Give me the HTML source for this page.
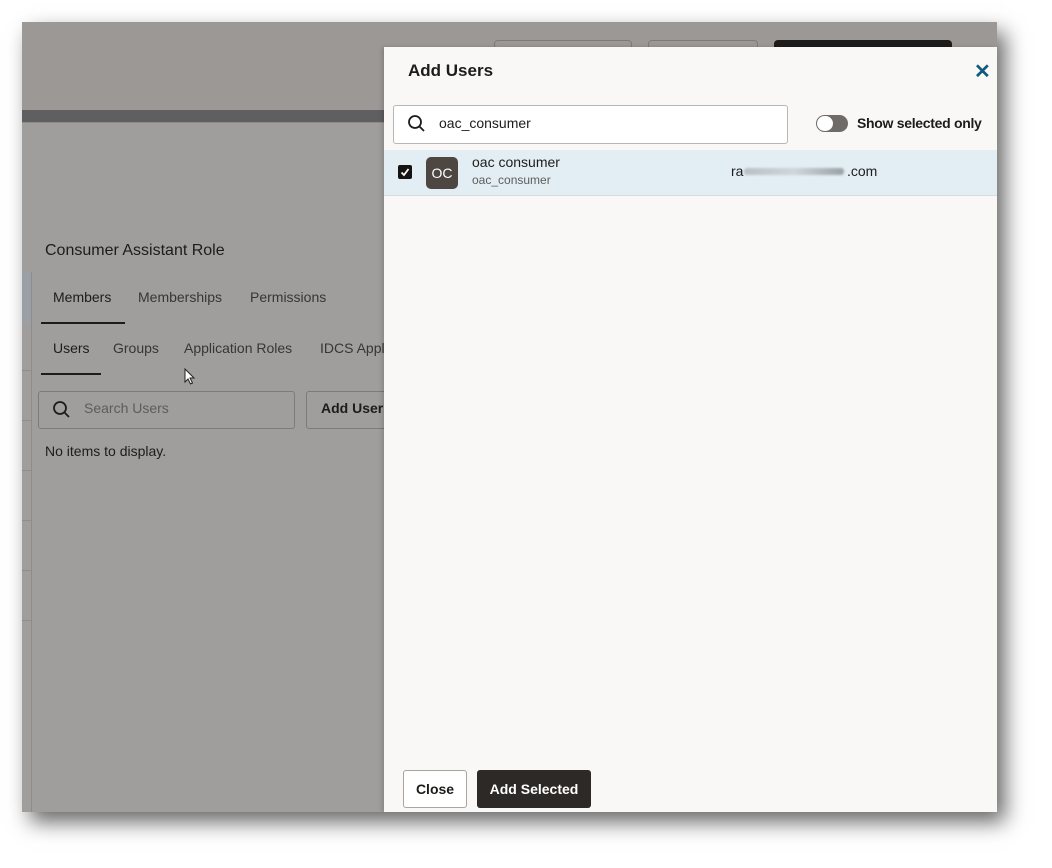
<!DOCTYPE html>
<html><head><meta charset="utf-8"><style>
*{box-sizing:border-box;margin:0;padding:0}
body{width:1052px;height:868px;background:#fff;font-family:"Liberation Sans",sans-serif;position:relative;overflow:hidden}
.shot{position:absolute;left:22px;top:22px;width:975px;height:790px;background:#a09e9c;box-shadow:8px 10px 20px rgba(0,0,0,.6);overflow:hidden}
.abs{position:absolute}
.t{position:absolute;white-space:nowrap;color:#1e1c1a}
</style></head><body>
<div class="shot">
  <div class="abs" style="left:0;top:0;width:975px;height:88px;background:#9c9896"></div>
  <div class="abs" style="left:0;top:88px;width:975px;height:12px;background:#5f5e60"></div>
  <div class="abs" style="left:0;top:100px;width:975px;height:1px;background:#8d8b89"></div>
  <div class="abs" style="left:472px;top:18px;width:138px;height:30px;border:1px solid #7e7a78;border-radius:4px"></div>
  <div class="abs" style="left:626px;top:18px;width:110px;height:30px;border:1px solid #7e7a78;border-radius:4px"></div>
  <div class="abs" style="left:752px;top:18px;width:178px;height:30px;background:#1f1d1c;border-radius:4px"></div>
  <div class="abs" style="left:0;top:250px;width:9px;height:50px;background:#9aa0a6"></div>
  <div class="abs" style="left:9px;top:250px;width:1px;height:540px;background:#8f8d8b"></div>
  <div class="abs" style="left:0;top:348px;width:9px;height:1px;background:#8f8d8b"></div>
  <div class="abs" style="left:0;top:398px;width:9px;height:1px;background:#8f8d8b"></div>
  <div class="abs" style="left:0;top:448px;width:9px;height:1px;background:#8f8d8b"></div>
  <div class="abs" style="left:0;top:498px;width:9px;height:1px;background:#8f8d8b"></div>
  <div class="abs" style="left:0;top:548px;width:9px;height:1px;background:#8f8d8b"></div>
  <div class="abs" style="left:0;top:598px;width:9px;height:1px;background:#8f8d8b"></div>
  <div class="t" style="left:23px;top:220px;font-size:16px">Consumer Assistant Role</div>
  <div class="t" style="left:31px;top:267px;font-size:14px">Members</div>
  <div class="t" style="left:116px;top:267px;font-size:14px;color:#383634">Memberships</div>
  <div class="t" style="left:228px;top:267px;font-size:14px;color:#383634">Permissions</div>
  <div class="abs" style="left:19px;top:300px;width:84px;height:2px;background:#1e1c1a"></div>
  <div class="t" style="left:31px;top:318px;font-size:14px">Users</div>
  <div class="t" style="left:91px;top:318px;font-size:14px;color:#383634">Groups</div>
  <div class="t" style="left:162px;top:318px;font-size:14px;color:#383634">Application Roles</div>
  <div class="t" style="left:298px;top:318px;font-size:14px;color:#383634">IDCS Appl</div>
  <div class="abs" style="left:19px;top:351px;width:60px;height:2px;background:#1e1c1a"></div>
  <div class="abs" style="left:16px;top:369px;width:257px;height:38px;border:1px solid #7e7a78;border-radius:3px"></div>
  <svg class="abs" style="left:30px;top:378px" width="20" height="20"><circle cx="8" cy="8" r="6" fill="none" stroke="#1e1c1a" stroke-width="1.8"/><path d="M12.5 12.5L17 17" stroke="#1e1c1a" stroke-width="1.8"/></svg>
  <div class="t" style="left:62px;top:378px;font-size:14px;color:#5e5c5a">Search Users</div>
  <div class="abs" style="left:284px;top:369px;width:100px;height:38px;border:1px solid #7e7a78;border-radius:3px"></div>
  <div class="t" style="left:299px;top:378px;font-size:14px;font-weight:bold">Add Users</div>
  <div class="t" style="left:23px;top:421px;font-size:14px">No items to display.</div>
  <svg class="abs" style="left:162px;top:346px" width="12" height="18"><path d="M1 1L1 14L4 11L6.5 16L8.5 15L6 10L10 10Z" fill="#fff" stroke="#222" stroke-width="1"/></svg>

  <div class="abs" style="left:362px;top:25px;width:613px;height:765px;background:#f9f8f6;box-shadow:-2px 0 4px rgba(0,0,0,.15)">
    <div class="t" style="left:24px;top:14px;font-size:17px;font-weight:bold">Add Users</div>
    <div class="t" style="left:590px;top:12px;font-size:20px;font-weight:bold;color:#0f5a7d">✕</div>
    <div class="abs" style="left:9px;top:58px;width:395px;height:39px;background:#fff;border:1px solid #bab6b2;border-radius:3px"></div>
    <svg class="abs" style="left:23px;top:67px" width="20" height="20"><circle cx="8" cy="8" r="6" fill="none" stroke="#1e1c1a" stroke-width="1.8"/><path d="M12.5 12.5L17 17" stroke="#1e1c1a" stroke-width="1.8"/></svg>
    <div class="t" style="left:55px;top:68px;font-size:14px">oac_consumer</div>
    <div class="abs" style="left:432px;top:68px;width:32px;height:17px;background:#6f6b68;border-radius:9px"></div>
    <div class="abs" style="left:433px;top:69px;width:16px;height:15px;background:#fff;border-radius:8px"></div>
    <div class="t" style="left:473px;top:68px;font-size:14px;font-weight:bold;letter-spacing:-0.3px">Show selected only</div>
    <div class="abs" style="left:0;top:103px;width:613px;height:46px;background:#e3eef4;border-bottom:1px solid #d6dde1"></div>
    <div class="abs" style="left:14px;top:118px;width:14px;height:14px;background:#161412;border-radius:2px"></div>
    <svg class="abs" style="left:14px;top:118px" width="14" height="14"><path d="M3.5 7.5L6 10L10.5 4" fill="none" stroke="#fff" stroke-width="1.8"/></svg>
    <div class="abs" style="left:42px;top:110px;width:32px;height:32px;background:#4d4641;border-radius:5px;color:#fff;font-size:14px;text-align:center;line-height:32px">OC</div>
    <div class="t" style="left:88px;top:107px;font-size:14px">oac consumer</div>
    <div class="t" style="left:88px;top:126px;font-size:12px;color:#5e5c5a">oac_consumer</div>
    <div class="t" style="left:347px;top:116px;font-size:14px">ra</div>
    <div class="abs" style="left:360px;top:121px;width:100px;height:7px;background:linear-gradient(90deg,#b9c1c5,#d0d6da,#9aa2a7);border-radius:3px;filter:blur(1px)"></div>
    <div class="t" style="left:463px;top:116px;font-size:14px">.com</div>
    <div class="abs" style="left:19px;top:723px;width:64px;height:38px;background:#fff;border:1px solid #a8a4a0;border-radius:3px;font-size:14px;font-weight:bold;text-align:center;line-height:36px;color:#1e1c1a">Close</div>
    <div class="abs" style="left:93px;top:723px;width:114px;height:38px;background:#2d2926;border-radius:3px;font-size:14px;font-weight:bold;text-align:center;line-height:38px;color:#fff">Add Selected</div>
  </div>
</div>
</body></html>
